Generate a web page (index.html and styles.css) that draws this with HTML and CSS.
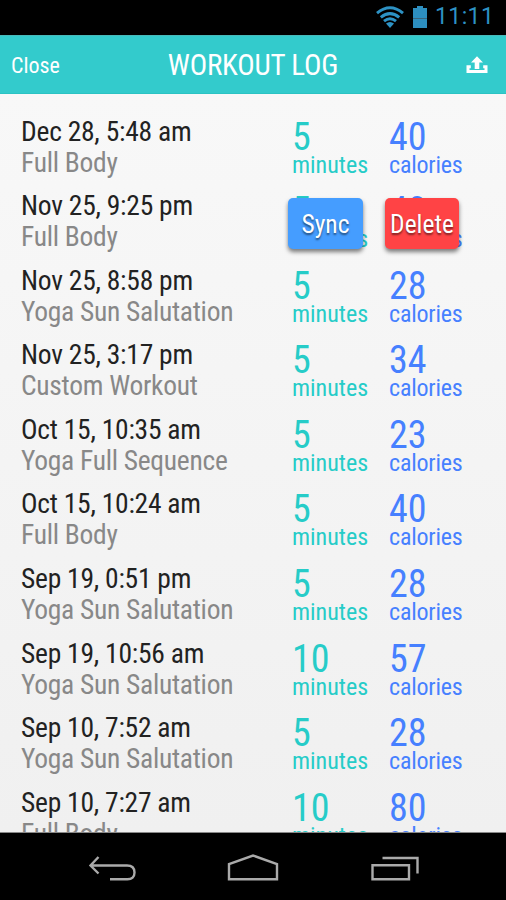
FILE: index.html
```
<!DOCTYPE html>
<html lang="en">
<head>
<meta charset="utf-8">
<title>Workout Log</title>
<link rel="stylesheet" href="styles.css">
</head>
<body>
<div class="status">
  <svg width="28" height="23" viewBox="0 0 28 23"><g fill="none" stroke="#2d92c4" stroke-width="3"><path d="M1 7.2Q14 -3.6 27 7.2M4.8 11.4Q14 3.8 23.2 11.4M8 15.2Q14 10.4 20 15.2"/></g><path d="M10 17.6Q14 14.6 18 17.6L14 22Z" fill="#2d92c4"/></svg>
  <svg class="battery" width="14" height="22" viewBox="0 0 14 22"><path d="M4 0h6v2h4v20H0V2h4Z" fill="#2d8fc0"/><path d="M0 12.5h14" stroke="#39657c"/></svg>
  <span class="clock">11:11</span>
</div>
<header class="bar">
  <span class="close">Close</span>
  <h1 class="title">WORKOUT LOG</h1>
  <svg class="share" width="22" height="18" viewBox="0 0 22 18"><path d="M11 .3 17 6.5H13.3V13H8.7V6.5H5Z" fill="#fff"/><path d="M4.8 10.7H2V15.6H20V10.7H17.2" fill="none" stroke="#fff" stroke-width="3"/></svg>
</header>
<main class="log" id="log"></main>
<nav class="nav">
  <svg width="506" height="68" viewBox="0 0 506 68" fill="none" stroke="#aaa" stroke-width="2.4"><path d="M98.5 24 90.5 32.5 98.5 40.5M91 32.5H127Q134.5 32.5 134.5 39.5T127 46.3H110"/><path d="M229 46.3V31L253 22.5 277 31V46.3Z"/><path d="M372.5 32.3H409V46.3H372.5ZM382.5 25H417.5V40.5"/></svg>
</nav>
<script src="script.js"></script>
</body>
</html>
```
FILE: styles.css
```
* { box-sizing: border-box; }
body { margin: 0; width: 506px; height: 900px; overflow: hidden; display: flex; flex-direction: column; background: #000; font-family: "Roboto Condensed", Roboto, sans-serif; font-stretch: 75%; }
.status { height: 35px; flex: none; display: flex; align-items: flex-start; padding: 6px 10px 0 376px; color: #2d92c4; }
.battery { margin: 0 0 0 9px; }
.clock { font: 400 23px/24px Roboto, sans-serif; letter-spacing: .4px; margin: -1px 0 0 8px; white-space: nowrap; }
.bar { height: 59px; flex: none; display: grid; grid-template-columns: 1fr auto 1fr; align-items: center; background: #33cbcc; border-top: 1px solid #48b9b9; border-bottom: 1px solid #2cc3c3; color: #fff; padding: 1px 18px 0 11px; }
.close { font-size: 22px; white-space: nowrap; padding-top: 1px; }
.title { font-size: 29px; font-weight: 400; letter-spacing: -.2px; margin: 0 0 0 7px; white-space: nowrap; }
.share { justify-self: end; }
.log { flex: 1; min-height: 0; overflow: hidden; padding: 21.5px 0 0 21px; background: linear-gradient(#f8f8f8, #f0f0f0); border-bottom: 1px solid #888; }
.row { position: relative; display: grid; grid-template-columns: 271px 97px 1fr; height: 74.6px; white-space: nowrap; }
.date, .name { font-size: 27.5px; line-height: 31px; letter-spacing: -.23px; }
.date { color: #222; }
.name { color: #888; letter-spacing: -.28px; }
.value { font-size: 38px; line-height: 42px; }
.unit { font-size: 24px; line-height: 15px; }
.calories .unit { letter-spacing: -.2px; }
.minutes { color: #26ccc8; }
.calories { color: #4680ff; }
.btn { position: absolute; top: 8px; height: 51px; border: 0; border-radius: 5px; padding: 2px 0 0; color: #fff; font: inherit; font-size: 25.5px; line-height: 49px; text-align: center; text-shadow: 0 2px 2px rgba(0,0,0,.5); box-shadow: 0 3px 4px rgba(0,0,0,.5); }
.sync { left: 267px; width: 75px; background: #459dff; }
.delete { left: 364px; width: 74px; background: #ff4345; }
.nav { height: 67px; flex: none; overflow: hidden; }
```
FILE: script.js
```
const entries = [
  ["Dec 28, 5:48 am", "Full Body", 5, 40],
  ["Nov 25, 9:25 pm", "Full Body", 5, 40],
  ["Nov 25, 8:58 pm", "Yoga Sun Salutation", 5, 28],
  ["Nov 25, 3:17 pm", "Custom Workout", 5, 34],
  ["Oct 15, 10:35 am", "Yoga Full Sequence", 5, 23],
  ["Oct 15, 10:24 am", "Full Body", 5, 40],
  ["Sep 19, 0:51 pm", "Yoga Sun Salutation", 5, 28],
  ["Sep 19, 10:56 am", "Yoga Sun Salutation", 10, 57],
  ["Sep 10, 7:52 am", "Yoga Sun Salutation", 5, 28],
  ["Sep 10, 7:27 am", "Full Body", 10, 80]
];
document.getElementById("log").innerHTML = entries.map(([date, name, min, cal], i) => `
  <div class="row">
    <div><div class="date"><span>${date}</span></div><div class="name"><span>${name}</span></div></div>
    <div class="minutes"><div class="value"><span>${min}</span></div><div class="unit"><span>minutes</span></div></div>
    <div class="calories"><div class="value"><span>${cal}</span></div><div class="unit"><span>calories</span></div></div>
    ${i === 1 ? '<button class="btn sync">Sync</button><button class="btn delete">Delete</button>' : ""}
  </div>`).join("");
```
